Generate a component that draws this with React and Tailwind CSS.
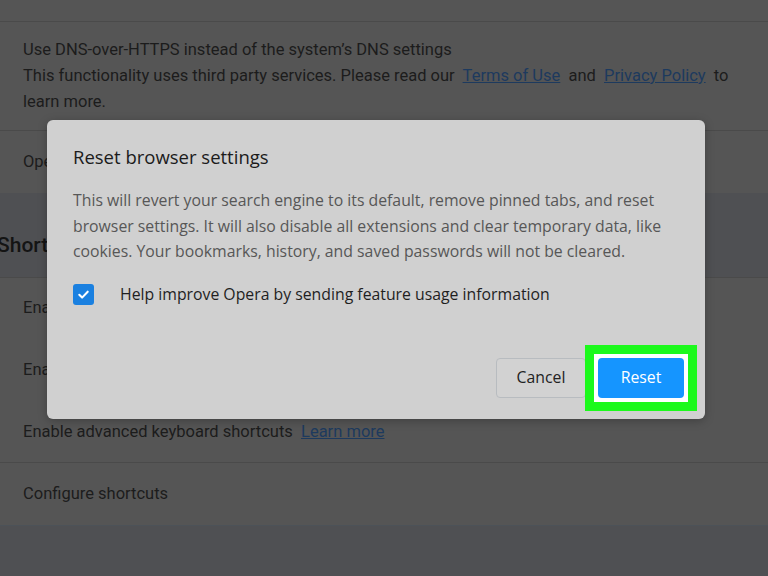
import React from "react";

function Row({ children, className = "" }) {
  return (
    <div className={`border-t border-[#4a4a4a] px-[23px] ${className}`}>
      {children}
    </div>
  );
}

function Link({ children }) {
  return <span className="text-[#1d3a5e] underline">{children}</span>;
}

export default function App() {
  const pageFont = { fontFamily: "Roboto, 'Liberation Sans', sans-serif" };
  const dialogFont = { fontFamily: "'Open Sans', 'Noto Sans', sans-serif" };

  return (
    <div className="relative h-[576px] w-[768px] overflow-hidden bg-[#4f5053] text-[16.5px] text-[#1c1c1c]" style={pageFont}>
      <div className="h-[21px] bg-[#555555]" />
      <div className="bg-[#555555]">
        <Row className="flex h-[109px] flex-col justify-center leading-[26px]">
          <p>Use DNS-over-HTTPS instead of the system’s DNS settings</p>
          <p>
            This functionality uses third party services. Please read our&nbsp;{" "}
            <Link>Terms of Use</Link>&nbsp; and&nbsp; <Link>Privacy Policy</Link>&nbsp; to
            <br />
            learn more.
          </p>
        </Row>
        <Row className="flex h-[63px] items-center">
          <p>Open settings for secure DNS</p>
        </Row>
      </div>

      <div className="flex h-[84px] items-end pb-[16px]">
        <h2 className="ml-[-3px] text-[21px] font-medium text-[#141414]">Shortcuts</h2>
      </div>

      <div className="bg-[#555555]">
        <Row className="flex h-[62px] items-center">
          <p>Enable shortcut keys</p>
        </Row>
        <Row className="flex h-[62px] items-center border-[#555555]">
          <p>Enable mouse gestures</p>
        </Row>
        <Row className="flex h-[61px] items-center border-[#555555]">
          <p>
            Enable advanced keyboard shortcuts&nbsp; <Link>Learn more</Link>
          </p>
        </Row>
        <Row className="flex h-[63px] items-center">
          <p>Configure shortcuts</p>
        </Row>
      </div>

      <div className="h-[46px] border-t border-[#4c5258]" />
      <h2 className="ml-[-3px] text-[21px] font-medium text-[#141414]">Reset settings</h2>

      {/* dialog */}
      <div
        className="absolute left-[47px] top-[120px] flex h-[299px] w-[658px] flex-col rounded-[6px] bg-[#d0d0d0] px-[26px] pt-[22px] shadow-[0_2px_10px_rgba(0,0,0,0.25)]"
        style={dialogFont}
      >
        <h1 className="text-[18.5px] leading-[30px] text-[#1b1b1b]">Reset browser settings</h1>
        <p className="mt-[16px] text-[15.8px] leading-[25.5px] text-[#575757]">
          This will revert your search engine to its default, remove pinned tabs, and reset browser
          settings. It will also disable all extensions and clear temporary data, like cookies. Your
          bookmarks, history, and saved passwords will not be cleared.
        </p>
        <div className="mt-[18px] flex items-center gap-[26px]">
          <span className="flex h-[21px] w-[21px] items-center justify-center rounded-[3px] bg-[#1a80e0]">
            <svg viewBox="0 0 16 16" className="h-[15px] w-[15px]" fill="none" stroke="white" strokeWidth="2.2" strokeLinecap="round" strokeLinejoin="round">
              <path d="M3.5 8.3l3 3 6-6.3" />
            </svg>
          </span>
          <span className="text-[15.8px] text-[#1f1f1f]">Help improve Opera by sending feature usage information</span>
        </div>

        <div className="mt-auto mb-[21px] mr-[-5px] flex items-center justify-end gap-[12px]">
          <button className="flex h-[40px] w-[90px] items-center justify-center rounded-[4px] border border-[#b8bcc0] bg-[#d2d2d2] text-[15.8px] text-[#222222]">
            Cancel
          </button>
          {/* green highlight drawn over the dialog around the Reset button */}
          <div className="relative h-[40px] w-[86px]">
            <div className="absolute inset-[-13px] bg-[#1cf91c]" />
            <div className="absolute inset-[-4px] bg-white" />
            <button className="relative flex h-[40px] w-[86px] items-center justify-center rounded-[4px] bg-[#1595ff] text-[15.8px] text-white">
              Reset
            </button>
          </div>
        </div>
      </div>
    </div>
  );
}
